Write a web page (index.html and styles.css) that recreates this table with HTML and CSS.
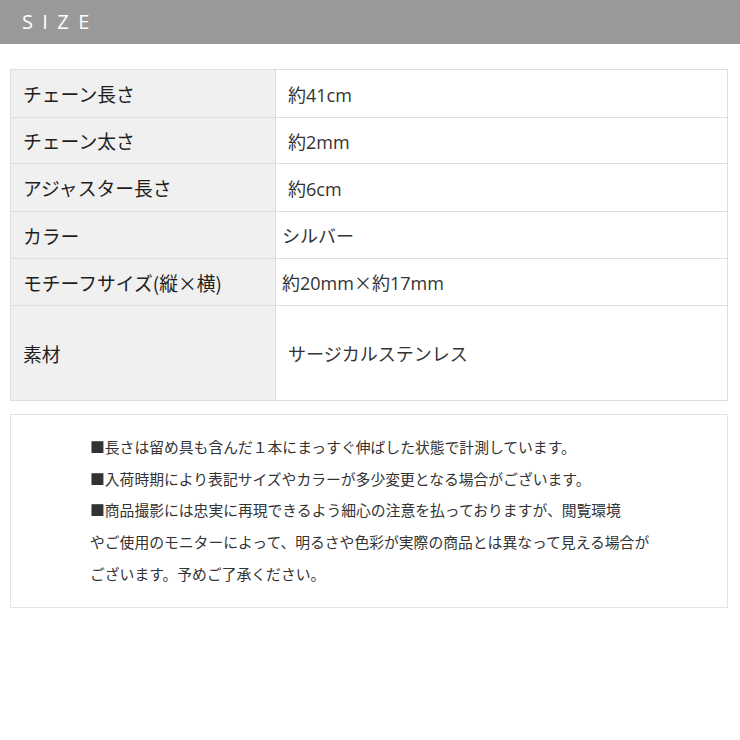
FILE: index.html
```html
<!DOCTYPE html>
<html lang="ja">

<head>
    <meta charset="utf-8">
    <title>SIZE</title>
    <link rel="stylesheet" href="styles.css">
</head>

<body>
    <div class="heading">SIZE</div>

    <table class="spec">
        <tr class="wide">
            <th>チェーン長さ</th>
            <td class="indent">約41cm</td>
        </tr>
        <tr class="short">
            <th>チェーン太さ</th>
            <td class="indent">約2mm</td>
        </tr>
        <tr class="wide">
            <th>アジャスター長さ</th>
            <td class="indent">約6cm</td>
        </tr>
        <tr>
            <th>カラー</th>
            <td>シルバー</td>
        </tr>
        <tr>
            <th>モチーフサイズ(縦×横)</th>
            <td>約20mm<span class="cross">×</span>約17mm</td>
        </tr>
        <tr class="tall">
            <th>素材</th>
            <td class="indent">サージカルステンレス</td>
        </tr>
    </table>

    <div class="notes">
        <p>■長さは留め具も含んだ１本にまっすぐ伸ばした状態で計測しています。</p>
        <p>■入荷時期により表記サイズやカラーが多少変更となる場合がございます。</p>
        <p>■商品撮影には忠実に再現できるよう細心の注意を払っておりますが、閲覧環境<br>やご使用のモニターによって、明るさや色彩が実際の商品とは異なって見える場合が<br>ございます。予めご了承ください。</p>
    </div>
</body>

</html>
```

FILE: styles.css
```css
:root {
    --head-bg: #999999;
    --cell-bg: #f0f0f0;
    --line: #dddddd;
    --text: #333333;
}

body {
    margin: 0;
    background: #ffffff;
    color: var(--text);
    font-family: "Open Sans", "Noto Sans CJK JP", sans-serif;
}

.heading {
    height: 44px;
    line-height: 44px;
    padding-left: 22px;
    background: var(--head-bg);
    color: #ffffff;
    font-size: 20px;
    letter-spacing: 9.4px;
}

.spec {
    width: 718px;
    margin: 25px 0 0 10px;
    border-collapse: collapse;
    font-size: 18px;
}

.spec tr {
    height: 47px;
}

.spec tr.wide {
    height: 48px;
}

.spec tr.short {
    height: 46px;
}

.spec tr.tall {
    height: 95px;
}

.spec th,
.spec td {
    border: 1px solid var(--line);
    padding: 0 12px;
    font-weight: normal;
    text-align: left;
    vertical-align: middle;
}

.spec th {
    width: 240px;
    background: var(--cell-bg);
    color: #1e1e1e;
    font-family: "Noto Sans CJK JP", sans-serif;
    font-size: 18.8px;
}

.spec td {
    padding-left: 6px;
}

.spec td.indent {
    padding-left: 12px;
}

.spec .cross {
    font-family: "Noto Sans CJK JP", sans-serif;
}

.notes {
    margin: 13px 12px 0 10px;
    padding: 16px 0 17px 79px;
    border: 1px solid #e3e3e3;
    font-family: "Noto Sans CJK JP", sans-serif;
    font-size: 14.8px;
    line-height: 31.7px;
}

.notes p {
    margin: 0;
}
```
